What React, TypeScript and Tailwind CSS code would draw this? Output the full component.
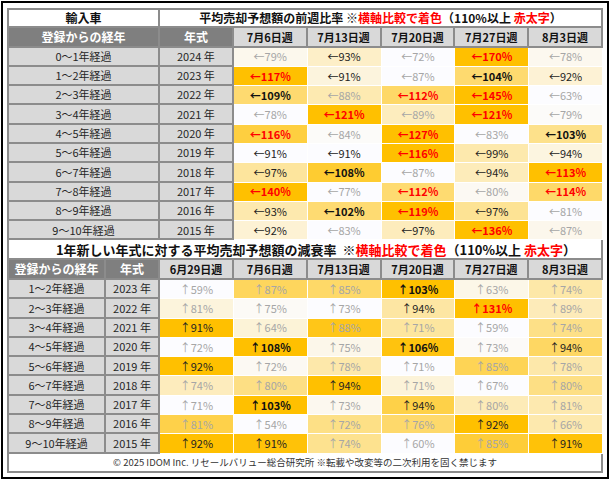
import React from "react";

type Row = { label: string; year: string; v: number[] };

const topDates = ["7月6日週", "7月13日週", "7月20日週", "7月27日週", "8月3日週"];
const bottomDates = ["6月29日週", "7月6日週", "7月13日週", "7月20日週", "7月27日週", "8月3日週"];

const topRows: Row[] = [
  { label: "0～1年経過", year: "2024 年", v: [79, 93, 72, 170, 78] },
  { label: "1～2年経過", year: "2023 年", v: [117, 91, 87, 104, 92] },
  { label: "2～3年経過", year: "2022 年", v: [109, 88, 112, 145, 63] },
  { label: "3～4年経過", year: "2021 年", v: [78, 121, 89, 121, 79] },
  { label: "4～5年経過", year: "2020 年", v: [116, 84, 127, 83, 103] },
  { label: "5～6年経過", year: "2019 年", v: [91, 91, 116, 99, 94] },
  { label: "6～7年経過", year: "2018 年", v: [97, 108, 87, 94, 113] },
  { label: "7～8年経過", year: "2017 年", v: [140, 77, 112, 80, 114] },
  { label: "8～9年経過", year: "2016 年", v: [93, 102, 119, 97, 81] },
  { label: "9～10年経過", year: "2015 年", v: [92, 83, 97, 136, 87] },
];

const bottomRows: Row[] = [
  { label: "1～2年経過", year: "2023 年", v: [59, 87, 85, 103, 63, 74] },
  { label: "2～3年経過", year: "2022 年", v: [81, 75, 73, 94, 131, 89] },
  { label: "3～4年経過", year: "2021 年", v: [91, 64, 88, 71, 59, 74] },
  { label: "4～5年経過", year: "2020 年", v: [72, 108, 75, 106, 73, 94] },
  { label: "5～6年経過", year: "2019 年", v: [92, 72, 78, 71, 85, 78] },
  { label: "6～7年経過", year: "2018 年", v: [74, 80, 94, 71, 67, 80] },
  { label: "7～8年経過", year: "2017 年", v: [71, 103, 73, 94, 80, 81] },
  { label: "8～9年経過", year: "2016 年", v: [81, 54, 72, 76, 92, 66] },
  { label: "9～10年経過", year: "2015 年", v: [92, 91, 74, 60, 85, 91] },
];

function scale(v: number, arr: number[]) {
  const min = Math.min(...arr);
  const max = Math.max(...arr);
  const t = max === min ? 0 : (v - min) / (max - min);
  const a = [252, 252, 255];
  const b = [255, 192, 0];
  const c = a.map((x, i) => Math.round(x + (b[i] - x) * t));
  return `rgb(${c[0]},${c[1]},${c[2]})`;
}

function textCls(v: number) {
  if (v >= 110) return "text-[#ff0000] font-bold";
  if (v >= 100) return "text-[#111111] font-bold";
  if (v >= 90) return "text-[#222222]";
  return "text-[#a6a6a6]";
}

const labelCell =
  "h-[19.3px] flex items-center justify-center bg-[#d9d9d9] text-[#262626] text-[11px] border-r-2 border-b-2 border-[#8c8c8c]";
const headDark =
  "h-[19.5px] flex items-center justify-center bg-[#7f7f7f] text-white font-bold text-[12px] border-r-2 border-b-2 border-[#8c8c8c]";
const headDate =
  "h-[19.5px] flex items-center justify-center bg-[#d9d9d9] text-[#111111] font-bold text-[11px] border-r-2 border-b-2 border-[#8c8c8c]";

function DataCell({ v, arr, arrow }: { v: number; arr: number[]; arrow: string }) {
  return (
    <div
      className={`h-[19.3px] flex items-center justify-center text-[11px] border-r border-b border-white ${textCls(v)}`}
      style={{ backgroundColor: scale(v, arr) }}
    >
      <span>{arrow}</span>
      <span>{v}%</span>
    </div>
  );
}

export default function App() {
  return (
    <div className="w-[612px] h-[480px] bg-white font-['Noto_Sans_CJK_JP','Liberation_Sans',sans-serif]">
      <div className="ml-[1px] mt-[1px] w-[608px] h-[478px] border-2 border-black pl-[4px] pt-[5px]">
        <div className="w-[596px] border-l-2 border-t-2 border-[#8c8c8c]">
          {/* Top section */}
          <div className="grid grid-cols-[97px_54px_repeat(6,minmax(0,1fr))]">
            <div className="col-span-2 h-[18px] flex items-center justify-center bg-white font-bold text-[12px] text-[#111111] border-r-2 border-b-2 border-[#8c8c8c]">
              輸入車
            </div>
            <div className="col-span-6 h-[18px] flex items-center justify-center bg-white font-bold text-[12px] text-[#111111] border-r-2 border-b-2 border-[#8c8c8c]">
              <span>平均売却予想額の前週比率&nbsp;※</span>
              <span className="text-[#ff0000]">横軸比較で着色</span>
              <span>（110%以上&nbsp;</span>
              <span className="text-[#ff0000]">赤太字</span>
              <span>）</span>
            </div>
            <div className={`col-span-2 ${headDark}`}>登録からの経年</div>
            <div className={headDark}>年式</div>
            {topDates.map((d) => (
              <div key={d} className={headDate}>
                {d}
              </div>
            ))}
            {topRows.map((r) => (
              <React.Fragment key={r.label}>
                <div className={`col-span-2 ${labelCell}`}>{r.label}</div>
                <div className={labelCell}>{r.year}</div>
                {r.v.map((v, i) => (
                  <DataCell key={i} v={v} arr={r.v} arrow="←" />
                ))}
              </React.Fragment>
            ))}
          </div>

          {/* Bottom section */}
          <div className="grid grid-cols-[97px_54px_repeat(6,minmax(0,1fr))]">
            <div className="col-span-8 h-[20px] flex items-center justify-center pl-[22px] bg-white font-bold text-[13px] text-[#111111] border-r-2 border-b-2 border-[#8c8c8c]">
              <span>1年新しい年式に対する平均売却予想額の減衰率&nbsp;&nbsp;※</span>
              <span className="text-[#ff0000]">横軸比較で着色</span>
              <span>（110%以上&nbsp;</span>
              <span className="text-[#ff0000]">赤太字</span>
              <span>）</span>
            </div>
            <div className={headDark}>登録からの経年</div>
            <div className={headDark}>年式</div>
            {bottomDates.map((d) => (
              <div key={d} className={headDate}>
                {d}
              </div>
            ))}
            {bottomRows.map((r) => (
              <React.Fragment key={r.label}>
                <div className={labelCell}>{r.label}</div>
                <div className={labelCell}>{r.year}</div>
                {r.v.map((v, i) => (
                  <DataCell key={i} v={v} arr={r.v} arrow="↑" />
                ))}
              </React.Fragment>
            ))}
            <div className="col-span-8 h-[19.5px] flex items-center justify-center bg-white text-[9.5px] text-[#333333] border-r-2 border-b-2 border-[#8c8c8c]">
              © 2025 IDOM Inc. リセールバリュー総合研究所 ※転載や改変等の二次利用を固く禁じます
            </div>
          </div>
        </div>
      </div>
    </div>
  );
}
